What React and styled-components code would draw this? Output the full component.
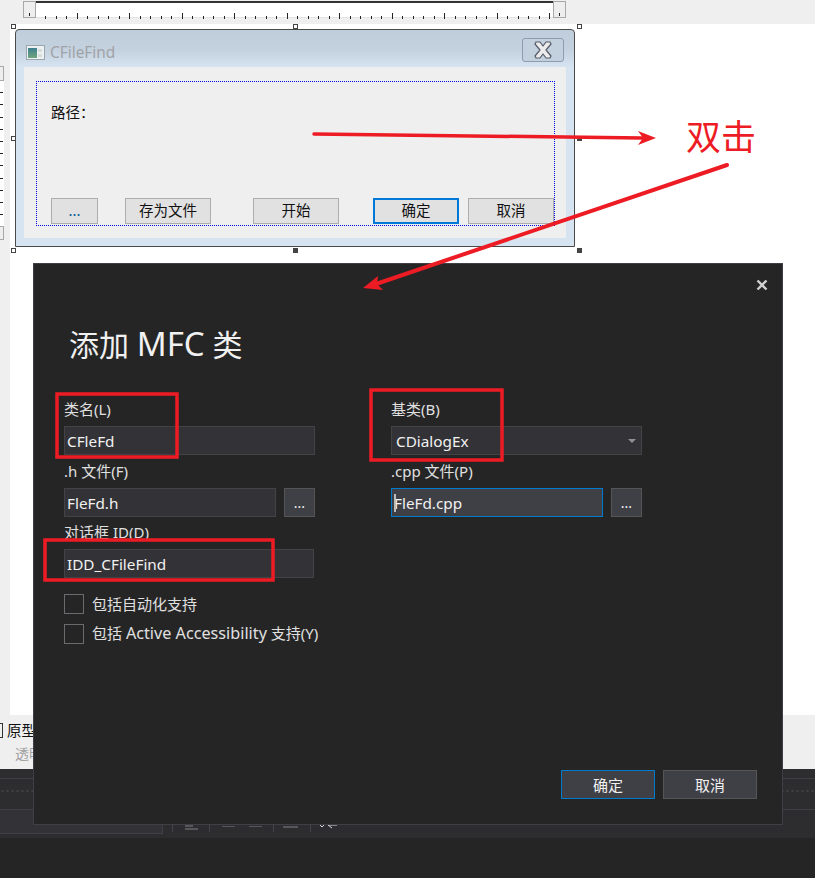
import React from 'react';
import styled, { createGlobalStyle } from 'styled-components';

const GlobalStyle = createGlobalStyle`
  html, body {
    margin: 0;
    padding: 0;
    background: #252526;
  }
  * {
    box-sizing: border-box;
  }
`;

const Page = styled.div`
  position: relative;
  width: 815px;
  height: 878px;
  overflow: hidden;
  display: flex;
  flex-direction: column;
  font-family: "Noto Sans", "Noto Sans CJK SC", sans-serif;
`;

const RulerBar = styled.div`
  height: 24px;
  background: #efefef;
  padding: 1px 0 0 23px;
  display: flex;
`;

const RulerEnd = styled.div`
  position: relative;
  width: 13px;
  height: 17px;
  background: #eeeeee;
  border: 1px solid #a8a8a8;
  &::after {
    content: '';
    position: absolute;
    left: 5px;
    bottom: 1px;
    width: 1px;
    height: 3px;
    background: #222;
  }
`;

const RulerTrack = styled.div`
  width: 517px;
  height: 17px;
  background: #fff;
  border-top: 2px solid #333;
  box-shadow: inset 0 -1px 0 #e4e4e4;
`;

const Workspace = styled.div`
  height: 691px;
  background: #efefef;
  display: flex;
`;

const LeftStrip = styled.div`
  width: 10px;
  padding-top: 42px;
`;

const SideEnd = styled.div`
  width: 4px;
  height: ${({ h }) => h}px;
  background: #eee;
  border: 1px solid #a8a8a8;
  border-left: none;
`;

const SideTrack = styled.div`
  width: 4px;
  height: 145px;
  background: repeating-linear-gradient(#fff 0 11.2px, #222 11.2px 12.2px);
  background-size: 3px 100%;
  background-repeat: no-repeat;
  background-color: #fff;
`;

const Canvas = styled.div`
  flex: 1;
  background: #fff;
  padding: 5px 0 0 5px;
`;

const Selection = styled.div`
  position: relative;
  width: 560px;
  height: 218px;
`;

const Handle = styled.span`
  position: absolute;
  width: 5px;
  height: 5px;
  border: 1px solid #444;
  background: ${({ filled }) => (filled ? '#444' : '#fff')};
  left: ${({ x }) => x}px;
  top: ${({ y }) => y}px;
`;

const DialogWindow = styled.div`
  width: 100%;
  height: 100%;
  border: 1px solid #4a4a4a;
  border-radius: 4px 4px 0 0;
  padding: 0 8px 8px;
  display: flex;
  flex-direction: column;
  background: linear-gradient(#bfcedc 0, #c4d1de 20px, #d6e3f0 37px);
`;

const TitleBar = styled.div`
  height: 37px;
  flex: none;
  display: flex;
  align-items: center;
  padding: 7px 0 0 2px;
  gap: 5px;
`;

const TitleText = styled.span`
  font-size: 15.4px;
  color: #a0a3a8;
`;

const CloseBox = styled.div`
  margin-left: auto;
  margin-top: -5px;
  margin-right: 2px;
  width: 42px;
  height: 24px;
  border: 1px solid #8e9cb0;
  border-radius: 3px;
  background: #c3d0de;
  display: flex;
  align-items: center;
  justify-content: center;
`;

const DialogBody = styled.div`
  flex: 1;
  background: #efefef;
  padding: 14px 11px 12px 12px;
`;

const Guide = styled.div`
  position: relative;
  height: 100%;
  border: 1px dotted #0000e0;
  padding: 21px 0 1px 14px;
  display: flex;
  flex-direction: column;
  font-family: "Noto Sans CJK SC", sans-serif;
`;

const PathLabel = styled.div`
  font-size: 14.5px;
  line-height: 17px;
  color: #111;
`;

const ButtonRow = styled.div`
  margin-top: auto;
  display: flex;
  height: 26px;
`;

const DlgButton = styled.div`
  flex: none;
  width: ${({ w }) => w}px;
  margin-left: ${({ gap }) => gap || 0}px;
  height: 26px;
  padding-bottom: 3px;
  background: #e1e1e1;
  border: ${({ focus }) => (focus ? '2px solid #0078d7' : '1px solid #adadad')};
  display: flex;
  align-items: center;
  justify-content: center;
  font-size: 14.5px;
  color: ${({ dots }) => (dots ? '#0b5a96' : '#111')};
`;

const BottomPanel = styled.div`
  height: 54px;
  background: #efefef;
  padding-top: 5px;
  font-family: "Noto Sans CJK SC", sans-serif;
`;

const PrototypeRow = styled.div`
  display: flex;
  align-items: center;
  gap: 4px;
  font-size: 14.5px;
  line-height: 20px;
  color: #111;
`;

const PrototypeCheck = styled.span`
  width: 3px;
  height: 15px;
  border: 1px solid #333;
  border-left: none;
`;

const TransparentLine = styled.div`
  font-size: 14px;
  line-height: 20px;
  color: #a0a0a0;
  padding-left: 15px;
  margin-top: 3px;
`;

const ToolStrip = styled.div`
  height: 10px;
  background: #2d2d30;
  border-bottom: 1px solid #3f3f46;
`;

const GripStrip = styled.div`
  height: 31px;
  background: #2d2d30;
  border-bottom: 1px solid #3f3f46;
  padding-top: 9px;
`;

const Grip = styled.div`
  height: 6px;
  background-image: radial-gradient(#404044 1px, transparent 1.2px);
  background-size: 5px 6px;
`;

const ToolRow = styled.div`
  height: 28px;
  background: #2d2d30;
  display: flex;
  align-items: flex-start;
  gap: 9px;
`;

const ToolInput = styled.div`
  width: 163px;
  height: 24px;
  background: #333337;
  border-right: 1px solid #3f3f46;
  border-bottom: 1px solid #3f3f46;
`;

const StatusFill = styled.div`
  flex: 1;
  background: #252526;
`;

const Modal = styled.div`
  position: absolute;
  left: 33px;
  top: 263px;
  width: 750px;
  height: 562px;
  background: #252526;
  border: 1px solid #3f3f46;
  padding: 0 25px 25px 30px;
  display: flex;
  flex-direction: column;
  color: #e6e6e6;
`;

const CloseIcon = styled.div`
  position: absolute;
  right: 14px;
  top: 15px;
  width: 12px;
  height: 12px;
  line-height: 0;
`;

const ModalTitle = styled.h1`
  margin: 58px 0 0 5px;
  font-size: 30px;
  line-height: 44px;
  font-weight: 400;
  color: #f1f1f1;
`;

const Latin = styled.span`
  font-size: ${({ scale }) => scale}em;
`;

const FormGrid = styled.div`
  margin-top: 33px;
  display: grid;
  grid-template-columns: 251px 251px;
  column-gap: 76px;
`;

const Column = styled.div`
  display: flex;
  flex-direction: column;
`;

const FieldLabel = styled.label`
  font-size: 15px;
  line-height: 19px;
  height: 26px;
  color: #e0e0e0;
  margin-top: ${({ top }) => top || 0}px;
`;

const FieldRow = styled.div`
  display: flex;
  gap: 8px;
  padding-right: ${({ trim }) => trim || 0}px;
`;

const Field = styled.div`
  flex: 1;
  position: relative;
  height: 29px;
  background: ${({ focus }) => (focus ? '#3f3f46' : '#333337')};
  border: 1px solid ${({ focus }) => (focus ? '#007acc' : '#434346')};
  padding: 0 ${({ pad }) => pad || 2}px;
  font-size: 15.3px;
  line-height: 29px;
  color: #f1f1f1;
`;

const Caret = styled.span`
  position: absolute;
  left: 2px;
  top: 5px;
  width: 2px;
  height: 18px;
  background: #bdbdbd;
`;

const Arrow = styled.span`
  position: absolute;
  right: 5px;
  top: 12px;
  width: 0;
  height: 0;
  border-left: 4px solid transparent;
  border-right: 4px solid transparent;
  border-top: 4px solid #8f8f94;
`;

const BrowseButton = styled.div`
  width: 31px;
  height: 29px;
  background: #3f3f46;
  border: 1px solid #555;
  font-size: 14px;
  line-height: 28px;
  text-align: center;
  color: #f1f1f1;
`;

const CheckRow = styled.div`
  display: flex;
  align-items: center;
  gap: 8px;
  height: 20px;
  margin-top: ${({ top }) => top}px;
  font-size: 15px;
  color: #e0e0e0;
  white-space: pre;
`;

const CheckText = styled.span`
  margin-top: -2px;
`;

const CheckBox = styled.span`
  flex: none;
  width: 20px;
  height: 20px;
  border: 1px solid #6b6b6f;
`;

const ModalFooter = styled.div`
  margin-top: auto;
  display: flex;
  justify-content: flex-end;
  gap: 8px;
`;

const FooterButton = styled.div`
  width: 94px;
  height: 29px;
  background: #3f3f46;
  border: 1px solid ${({ primary }) => (primary ? '#007acc' : '#555')};
  font-size: 15px;
  line-height: 29px;
  text-align: center;
  color: #f1f1f1;
`;

const Annotation = styled.svg`
  position: absolute;
  left: 0;
  top: 0;
  pointer-events: none;
`;

const DoubleClick = styled.div`
  position: absolute;
  left: 686px;
  top: 110px;
  font-family: "Noto Sans CJK SC", sans-serif;
  font-size: 35px;
  line-height: 50px;
  color: #ed1c24;
`;

const CloseGlyph = () => (
  <svg width="20" height="18" viewBox="0 0 20 18">
    <path d="M3 1 L7 1 L10 5 L13 1 L17 1 L18 3 L13 9 L18 15 L17 17 L13 17 L10 13 L7 17 L3 17 L2 15 L7 9 L2 3 Z" fill="#ececec" stroke="#555b68" strokeWidth="1.2" strokeLinejoin="round" />
  </svg>
);

const AppGlyph = () => (
  <svg width="19" height="15" viewBox="0 0 19 15">
    <defs>
      <linearGradient id="appFill" x1="0" y1="0" x2="0" y2="1">
        <stop offset="0" stopColor="#3e7f8f" />
        <stop offset="1" stopColor="#6fa67e" />
      </linearGradient>
    </defs>
    <rect x="0.5" y="0.5" width="18" height="14" fill="#eef1f2" stroke="#9aa6ad" />
    <rect x="2" y="3" width="9" height="10" fill="url(#appFill)" />
    <rect x="12" y="4" width="4" height="3" fill="#d5dcdc" />
    <rect x="12" y="9" width="4" height="3" fill="#d5dcdc" />
  </svg>
);

const Ticks = () => {
  const ticks = [];
  for (let i = 0; i < 51; i++) {
    const x = Math.round(9 + i * 10.5) + 0.5;
    const tall = i % 5 === 3;
    ticks.push(<line key={i} x1={x} x2={x} y1={tall ? 8 : 11} y2="14" stroke="#222" />);
  }
  return (
    <svg width="517" height="15" viewBox="0 0 517 15">
      {ticks}
    </svg>
  );
};

// toolbar of the window behind the dark dialog, only its lower edge shows
const ToolGlyphs = () => (
  <svg width="172" height="24" viewBox="0 0 172 24">
    <g fill="#46464a">
      <rect x="0" y="15" width="1" height="7" />
      <rect x="37" y="15" width="1" height="7" />
      <rect x="101" y="15" width="1" height="7" />
      <rect x="138" y="15" width="1" height="7" />
    </g>
    <g fill="#57575b">
      <rect x="13" y="15" width="8" height="2" />
      <rect x="13" y="18" width="13" height="2" />
      <rect x="50" y="16" width="13" height="1" />
      <rect x="77" y="16" width="13" height="1" />
      <rect x="111" y="16" width="15" height="2" />
    </g>
    <path d="M148 15 L150 17 L152 15 M156 15 L165 15 M156 15 L160 18" fill="none" stroke="#d8d8d8" strokeWidth="1" />
  </svg>
);

const handles = [
  [-4, -5, false], [278, -5, false], [562, -5, false],
  [-4, 107, false], [562, 107, true],
  [-4, 219, false], [278, 219, true], [562, 219, true],
];

const App = () => {
  return (
    <>
      <GlobalStyle />
      <Page>
        <RulerBar>
          <RulerEnd />
          <RulerTrack><Ticks /></RulerTrack>
          <RulerEnd />
        </RulerBar>
        <Workspace>
          <LeftStrip>
            <SideEnd h={15} />
            <SideTrack />
            <SideEnd h={14} />
          </LeftStrip>
          <Canvas>
            <Selection>
              <DialogWindow>
                <TitleBar>
                  <AppGlyph />
                  <TitleText>CFileFind</TitleText>
                  <CloseBox><CloseGlyph /></CloseBox>
                </TitleBar>
                <DialogBody>
                  <Guide>
                    <PathLabel>路径：</PathLabel>
                    <ButtonRow>
                      <DlgButton w={47} dots>...</DlgButton>
                      <DlgButton w={86} gap={27}>存为文件</DlgButton>
                      <DlgButton w={86} gap={42}>开始</DlgButton>
                      <DlgButton w={86} gap={34} focus>确定</DlgButton>
                      <DlgButton w={86} gap={9}>取消</DlgButton>
                    </ButtonRow>
                  </Guide>
                </DialogBody>
              </DialogWindow>
              {handles.map(([x, y, filled], i) => (
                <Handle key={i} x={x} y={y} filled={filled} />
              ))}
            </Selection>
          </Canvas>
        </Workspace>
        <BottomPanel>
          <PrototypeRow><PrototypeCheck />原型</PrototypeRow>
          <TransparentLine>透明</TransparentLine>
        </BottomPanel>
        <ToolStrip />
        <GripStrip><Grip /></GripStrip>
        <ToolRow>
          <ToolInput />
          <ToolGlyphs />
        </ToolRow>
        <StatusFill />

        <Modal>
          <CloseIcon>
            <svg width="12" height="12" viewBox="0 0 12 12">
              <path d="M1.5 1.5 L10.5 10.5 M10.5 1.5 L1.5 10.5" stroke="#d0d0d0" strokeWidth="2.4" />
            </svg>
          </CloseIcon>
          <ModalTitle>添加 <Latin scale={1.1}>MFC</Latin> 类</ModalTitle>
          <FormGrid>
            <Column>
              <FieldLabel>类名(L)</FieldLabel>
              <FieldRow><Field>CFleFd</Field></FieldRow>
              <FieldLabel top={7}>.h 文件(F)</FieldLabel>
              <FieldRow>
                <Field>FleFd.h</Field>
                <BrowseButton>...</BrowseButton>
              </FieldRow>
              <FieldLabel top={6}>对话框 ID(D)</FieldLabel>
              <FieldRow trim={1}><Field>IDD_CFileFind</Field></FieldRow>
              <CheckRow top={16}><CheckBox /><CheckText>包括自动化支持</CheckText></CheckRow>
              <CheckRow top={10}><CheckBox /><CheckText>包括 <Latin scale={1.08}>Active Accessibility</Latin> 支持(Y)</CheckText></CheckRow>
            </Column>
            <Column>
              <FieldLabel>基类(B)</FieldLabel>
              <FieldRow><Field pad={4}>CDialogEx<Arrow /></Field></FieldRow>
              <FieldLabel top={7}>.cpp 文件(P)</FieldLabel>
              <FieldRow>
                <Field focus><Caret />FleFd.cpp</Field>
                <BrowseButton>...</BrowseButton>
              </FieldRow>
            </Column>
          </FormGrid>
          <ModalFooter>
            <FooterButton primary>确定</FooterButton>
            <FooterButton>取消</FooterButton>
          </ModalFooter>
        </Modal>

        <Annotation width="815" height="878" viewBox="0 0 815 878">
          <g fill="none" stroke="#ed1c24" strokeWidth="3.5">
            <rect x="57" y="394" width="120" height="63" />
            <rect x="371" y="390" width="131" height="70" />
            <rect x="45" y="540" width="228" height="40" />
          </g>
          <path d="M314 134 L642 138" stroke="#ed1c24" strokeWidth="3.5" strokeLinecap="round" />
          <path d="M656 138 L638 131 L643 138 L638 145 Z" fill="#ed1c24" />
          <path d="M727 165 L376 284" stroke="#ed1c24" strokeWidth="4" strokeLinecap="round" />
          <path d="M363 288 L378 276 L377 284 L383 290 Z" fill="#ed1c24" />
        </Annotation>
        <DoubleClick>双击</DoubleClick>
      </Page>
    </>
  );
};

export default App;
